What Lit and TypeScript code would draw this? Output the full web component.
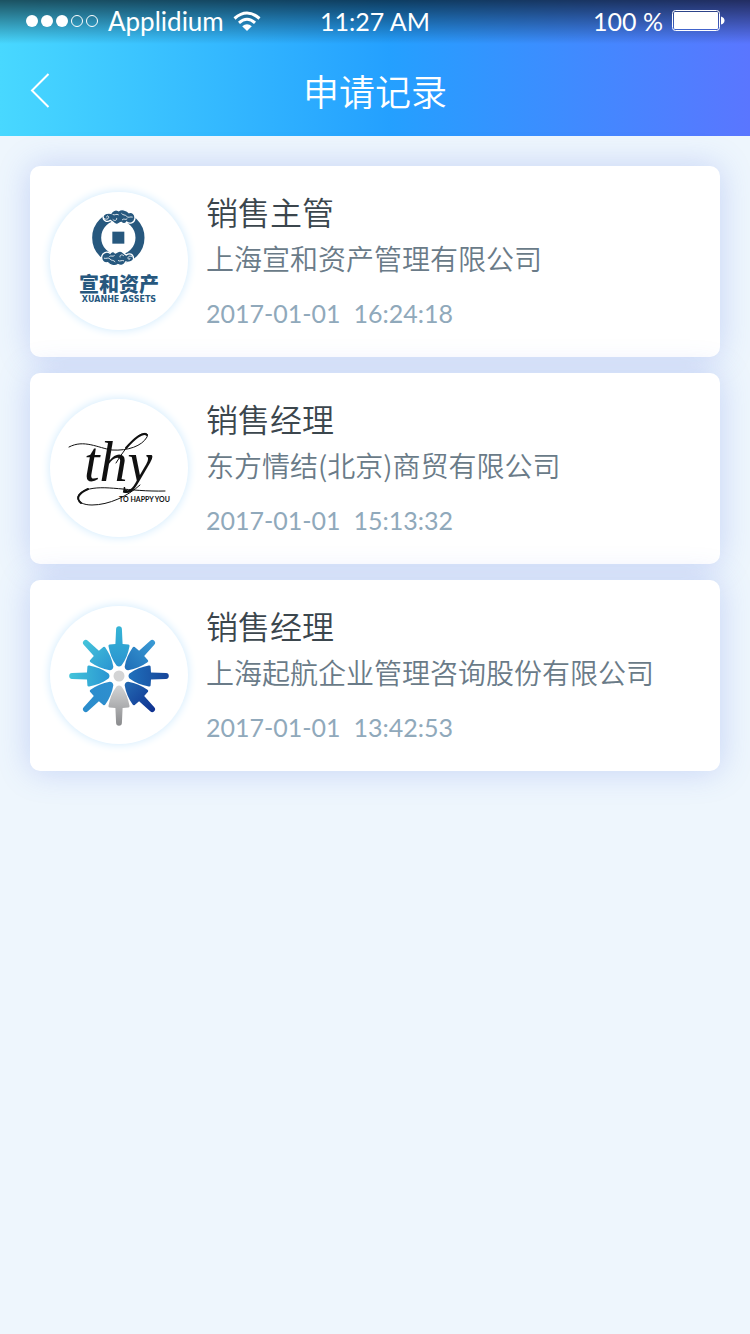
import { LitElement, html, css, svg, type TemplateResult } from "lit";
import { customElement, property } from "lit/decorators.js";

interface ApplicationRecord {
  job: string;
  company: string;
  time: string;
  logo: TemplateResult;
}

const dragon = svg`
  <path fill="#27587e" stroke="#fff" stroke-width="4" d="M54 34C54 50 68 52 76 46C82 48 86 57 94 58C101 59 104 52 109 52C114 58 121 57 125 51C134 58 148 54 150 40C151 28 142 20 132 23C124 13 108 12 101 17C92 12 82 16 78 25C70 22 56 26 54 34Z"></path>
  <g fill="none" stroke="#fff" stroke-width="2.500" stroke-linecap="round">
    <path d="M58 41C66 46 74 40 70 34C68 31 64 33 65 36"></path>
    <path d="M84 44C89 49 97 46 95 40"></path>
    <path d="M84 29C90 32 94 25 100 29"></path>
    <path d="M110 26C114 32 121 28 125 34C129 40 136 34 142 36"></path>
    <path d="M112 44C117 39 121 46 126 42"></path>
  </g>
`;

const ringLogo = html`
  <svg viewBox="0 0 138 138" role="img" aria-label="宣和资产">
    <g transform="translate(35 13) scale(0.3333)">
      <circle cx="100" cy="98" r="65" fill="none" stroke="#27587e" stroke-width="27"></circle>
      <rect x="82" y="80" width="36" height="36" fill="#27587e"></rect>
      ${dragon}
      <g transform="rotate(180 100 98)">${dragon}</g>
    </g>
    <text class="mark-cn" x="69" y="100" text-anchor="middle">宣和资产</text>
    <text class="mark-en" x="69" y="110" text-anchor="middle">XUANHE ASSETS</text>
  </svg>
`;

const scriptLogo = html`
  <svg viewBox="0 0 138 138" role="img" aria-label="thy to happy you">
    <g fill="none" stroke="#111" stroke-linecap="round">
      <path stroke-width="1" d="M19 48C34 40 48 49 62 51C78 52 92 47 97 38C99 33 92 33 86 39C78 46 72 54 66 64"></path>
      <path stroke-width="2" d="M97 36C93 32 84 40 76 49"></path>
      <path stroke-width="1" d="M90 86C78 97 59 106 42 106C26 106 23 96 36 91C54 85 78 93 115 92"></path>
      <path stroke-width="2" d="M31 104C25 99 29 94 38 90"></path>
    </g>
    <text class="mark-thy" x="34" y="82">thy</text>
    <text class="mark-tag" x="69" y="103">TO HAPPY YOU</text>
  </svg>
`;

/* Colours of each spoke, clockwise from the top: outer end, inner end. */
const spokes = [
  ["#35b4d6", "#2a94d0"],
  ["#3a9ad4", "#1f6fb8"],
  ["#17469a", "#1f70bc"],
  ["#0f3190", "#2369b2"],
  ["#8b8c8e", "#d2d3d4"],
  ["#2a8ccb", "#2f8fcf"],
  ["#42c3da", "#2a96d2"],
  ["#45c3da", "#2a96d2"],
];

const wheelLogo = html`
  <svg viewBox="0 0 138 138" role="img" aria-label="起航">
    <defs>
      ${spokes.map(
        ([outer, inner], i) => svg`
          <linearGradient id="spoke${i}" gradientUnits="userSpaceOnUse" x1="0" y1="-49" x2="0" y2="-10">
            <stop offset="0" stop-color=${outer}></stop>
            <stop offset="1" stop-color=${inner}></stop>
          </linearGradient>`,
      )}
    </defs>
    <g transform="translate(69 70)">
      ${spokes.map(
        (_, i) => svg`
          <path transform="rotate(${i * 45})" fill="url(#spoke${i})"
            d="M-2.900 -47Q-2.700 -49.800 0 -49.800Q2.700 -49.800 2.900 -47L3.600 -32L9.400 -31.600Q10.800 -31.300 10.500 -29.800C9.200 -23 7 -16.500 2.500 -10.500Q0 -8.500 -2.500 -10.500C-7 -16.500 -9.200 -23 -10.500 -29.800Q-10.800 -31.300 -9.400 -31.600L-3.600 -32Z"></path>`,
      )}
      <circle r="5.500" fill="#d3d4d5"></circle>
    </g>
  </svg>
`;

const records: ApplicationRecord[] = [
  { job: "销售主管", company: "上海宣和资产管理有限公司", time: "2017-01-01  16:24:18", logo: ringLogo },
  { job: "销售经理", company: "东方情结(北京)商贸有限公司", time: "2017-01-01  15:13:32", logo: scriptLogo },
  { job: "销售经理", company: "上海起航企业管理咨询股份有限公司", time: "2017-01-01  13:42:53", logo: wheelLogo },
];

@customElement("status-bar")
export class StatusBar extends LitElement {
  static styles = css`
    :host {
      display: grid;
      grid-template-columns: 1fr auto 1fr;
      align-items: center;
      height: 44px;
      padding: 0 25px 2px;
      box-sizing: border-box;
      font-size: 25px;
      font-weight: 400;
      line-height: 30px;
      background: linear-gradient(rgba(0, 0, 0, 0.62), rgba(0, 0, 0, 0));
    }
    .side {
      display: flex;
      align-items: center;
      gap: 9px;
    }
    .carrier {
      font-size: 26px;
    }
    .end {
      justify-content: flex-end;
    }
    svg {
      display: block;
    }
  `;

  render() {
    return html`
      <div class="side">
        <svg width="74" height="14" viewBox="0 0 74 14" fill="#fff" role="img" aria-label="信号">
          <circle cx="7" cy="7" r="6"></circle>
          <circle cx="22" cy="7" r="6"></circle>
          <circle cx="37" cy="7" r="6"></circle>
          <g fill="none" stroke="#fff">
            <circle cx="52" cy="7" r="5.500"></circle>
            <circle cx="67" cy="7" r="5.500"></circle>
          </g>
        </svg>
        <span class="carrier">Applidium</span>
        <svg width="28" height="20" viewBox="0 0 28 20" fill="none" stroke="#fff" stroke-width="3" role="img" aria-label="Wi-Fi">
          <path d="M1.500 7.500Q14 -3.500 26.500 7.500"></path>
          <path d="M6 11.800Q14 4.800 22 11.800"></path>
          <path fill="#fff" stroke="none" d="M9.200 15.300Q14 11.300 18.800 15.300L14 20Z"></path>
        </svg>
      </div>
      <span>11:27 AM</span>
      <div class="side end">
        <span>100 %</span>
        <svg width="53" height="22" viewBox="0 0 53 22" role="img" aria-label="电量">
          <rect x="0.500" y="0.500" width="47" height="20" rx="3" fill="none" stroke="#fff"></rect>
          <rect x="2" y="2" width="44" height="17" rx="1" fill="#fff"></rect>
          <path d="M49 6.500Q52.500 7.500 52.500 10.500T49 14.500Z" fill="#fff"></path>
        </svg>
      </div>
    `;
  }
}

@customElement("record-card")
export class RecordCard extends LitElement {
  @property({ attribute: false }) record!: ApplicationRecord;

  static styles = css`
    :host {
      display: block;
    }
    .card {
      display: flex;
      align-items: center;
      gap: 18px;
      padding: 21px 20px 22px;
      border-radius: 10px;
      background: #fff;
      box-shadow: 0 0 32px rgba(90, 118, 225, 0.28);
    }
    .avatar {
      flex: none;
      width: 138px;
      height: 138px;
      border-radius: 50%;
      background: #fff;
      box-shadow: 0 0 8px 1px #d6edfd;
    }
    svg {
      display: block;
      width: 100%;
      height: 100%;
    }
    .mark-cn {
      font: 900 20px "Noto Sans CJK SC", sans-serif;
      fill: #27587e;
    }
    .mark-en {
      font: bold 8px "DejaVu Sans", sans-serif;
      fill: #27587e;
    }
    .mark-thy {
      font: italic 56px "Liberation Serif", serif;
      fill: #111;
    }
    .mark-tag {
      font: bold 7px "Lato", sans-serif;
      fill: #111;
    }
    .info {
      flex: 1;
      min-width: 0;
    }
    .job,
    .company {
      margin: 0;
      font-family: "Noto Sans CJK SC", sans-serif;
      font-weight: 350;
    }
    .job {
      font-size: 32px;
      line-height: 48px;
      color: #3b464d;
    }
    .company {
      font-size: 28px;
      line-height: 46px;
      color: #6a7b88;
    }
    .time {
      display: block;
      margin-top: 10px;
      font-size: 25px;
      font-weight: 400;
      line-height: 44px;
      color: #90a9bb;
      white-space: pre-wrap;
    }
  `;

  render() {
    const { job, company, time, logo } = this.record;
    return html`
      <article class="card">
        <div class="avatar">${logo}</div>
        <div class="info">
          <h2 class="job">${job}</h2>
          <p class="company">${company}</p>
          <time class="time">${time}</time>
        </div>
      </article>
    `;
  }
}

@customElement("app-root")
export class AppRoot extends LitElement {
  static styles = css`
    :host {
      display: block;
      min-height: 100vh;
      background: #eef6fd;
      font-family: "Lato", "Noto Sans CJK SC", sans-serif;
    }
    .header {
      color: #fff;
      background: linear-gradient(90deg, #48d8ff, #24a0ff 52%, #5a76ff);
    }
    .nav {
      display: grid;
      grid-template-columns: 1fr auto 1fr;
      align-items: center;
      height: 92px;
      padding: 0 20px;
    }
    .back {
      display: flex;
      justify-self: start;
      padding: 10px;
      border: 0;
      background: none;
      color: inherit;
      cursor: pointer;
    }
    .title {
      margin: 0;
      font-family: "Noto Sans CJK SC", sans-serif;
      font-size: 36px;
      font-weight: 350;
      line-height: 52px;
    }
    .list {
      display: grid;
      gap: 16px;
      margin: 0;
      padding: 30px;
      list-style: none;
    }
  `;

  render() {
    return html`
      <header class="header">
        <status-bar></status-bar>
        <nav class="nav">
          <button class="back" type="button" aria-label="返回">
            <svg width="20" height="36" viewBox="0 0 20 36" fill="none" stroke="#fff" stroke-width="2">
              <path d="M18.500 2L2 18.500L18.500 35"></path>
            </svg>
          </button>
          <h1 class="title">申请记录</h1>
        </nav>
      </header>
      <main>
        <ul class="list">
          ${records.map((record) => html`<li><record-card .record=${record}></record-card></li>`)}
        </ul>
      </main>
    `;
  }
}
